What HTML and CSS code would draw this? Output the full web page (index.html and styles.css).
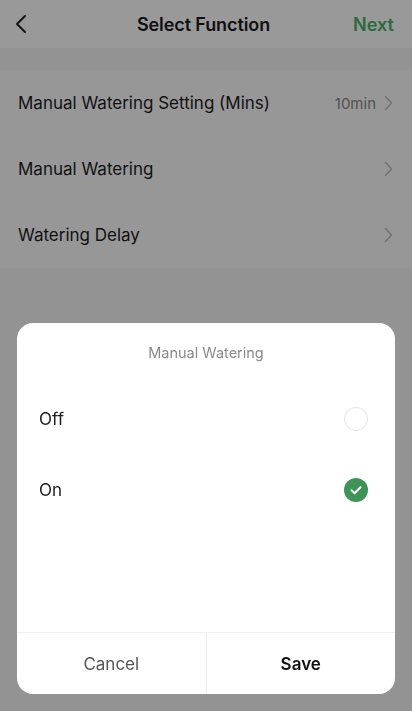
FILE: index.html
```html
<!DOCTYPE html>
<html lang="en">
<head>
<meta charset="utf-8">
<meta name="viewport" content="width=device-width, initial-scale=1">
<title>Select Function</title>
<link rel="stylesheet" href="styles.css">
</head>
<body>
<div class="page">
  <header class="nav">
    <button class="nav-back" aria-label="Back">
      <svg width="14" height="20" viewBox="0 0 14 20"><path d="M11 2 L3 10 L11 18" fill="none" stroke="#222" stroke-width="2" stroke-linecap="round" stroke-linejoin="round"/></svg>
    </button>
    <h1 class="nav-title">Select Function</h1>
    <button class="nav-next">Next</button>
  </header>
  <div class="band"></div>
  <ul class="list">
    <li class="row">
      <span class="row-label">Manual Watering Setting (Mins)</span>
      <span class="row-value">10min</span>
      <svg class="chev" width="9" height="16" viewBox="0 0 9 16"><path d="M1.5 1.5 L7.5 8 L1.5 14.5" fill="none" stroke="#bdbdbd" stroke-width="1.5" stroke-linecap="round" stroke-linejoin="round"/></svg>
    </li>
    <li class="row">
      <span class="row-label">Manual Watering</span>
      <svg class="chev" width="9" height="16" viewBox="0 0 9 16"><path d="M1.5 1.5 L7.5 8 L1.5 14.5" fill="none" stroke="#bdbdbd" stroke-width="1.5" stroke-linecap="round" stroke-linejoin="round"/></svg>
    </li>
    <li class="row">
      <span class="row-label">Watering Delay</span>
      <svg class="chev" width="9" height="16" viewBox="0 0 9 16"><path d="M1.5 1.5 L7.5 8 L1.5 14.5" fill="none" stroke="#bdbdbd" stroke-width="1.5" stroke-linecap="round" stroke-linejoin="round"/></svg>
    </li>
  </ul>
</div>

<div class="overlay">
  <div class="sheet">
    <div class="sheet-title">Manual Watering</div>
    <ul class="options">
      <li class="option">
        <span>Off</span>
        <span class="radio"></span>
      </li>
      <li class="option">
        <span>On</span>
        <span class="radio radio-on">
          <svg width="24" height="24" viewBox="0 0 24 24"><path d="M7.5 12.3 L10.6 15.2 L16.5 9.2" fill="none" stroke="#fff" stroke-width="2" stroke-linecap="round" stroke-linejoin="round"/></svg>
        </span>
      </li>
    </ul>
    <div class="actions">
      <button class="action action-cancel">Cancel</button>
      <button class="action action-save">Save</button>
    </div>
  </div>
</div>
</body>
</html>
```

FILE: styles.css
```css
* { box-sizing: border-box; }

html, body {
  margin: 0;
  padding: 0;
  height: 100%;
}

body {
  font-family: Inter, "Noto Sans", "Liberation Sans", sans-serif;
  background: #f5f5f5;
  color: #1c1c1c;
  -webkit-font-smoothing: antialiased;
}

button {
  font: inherit;
  background: none;
  border: 0;
  padding: 0;
  cursor: pointer;
}

ul { list-style: none; margin: 0; padding: 0; }

/* top navigation */
.nav {
  height: 48px;
  background: #fff;
  display: flex;
  align-items: center;
  justify-content: space-between;
  padding: 0 19px 0 14px;
}

.nav-back {
  width: 40px;
  display: flex;
  align-items: center;
  height: 48px;
}

.nav-title {
  margin: 0;
  font-size: 18px;
  font-weight: 600;
  letter-spacing: -0.1px;
  color: #1a1a1a;
}

.nav-next {
  width: 40px;
  text-align: right;
  font-size: 18px;
  font-weight: 600;
  color: #45b566;
}

.band {
  height: 22px;
  background: #f5f5f5;
}

/* function list */
.list {
  background: #fcfcfc;
}

.row {
  height: 66px;
  display: flex;
  align-items: center;
  padding: 0 19px 0 18px;
  font-size: 17px;
}

.row-label {
  flex: 1;
  color: #1c1c1c;
}

.row-value {
  font-size: 15px;
  color: #8a8a8a;
  margin-right: 8px;
}

.chev { display: block; }

/* dimmed layer with the bottom sheet */
.overlay {
  position: fixed;
  inset: 0;
  background: rgba(0, 0, 0, 0.4);
  display: flex;
  align-items: flex-end;
  padding: 0 17px 17px;
}

.sheet {
  width: 100%;
  height: 371px;
  background: #fff;
  border-radius: 16px;
  display: flex;
  flex-direction: column;
  overflow: hidden;
}

.sheet-title {
  margin-top: 20px;
  line-height: 20px;
  text-align: center;
  font-size: 14.5px;
  color: #8a8a8a;
}

.options {
  margin-top: 20px;
  flex: 1;
}

.option {
  height: 71px;
  display: flex;
  align-items: center;
  justify-content: space-between;
  padding: 0 27px 0 22px;
  font-size: 17px;
  color: #1c1c1c;
}

.radio {
  width: 24px;
  height: 24px;
  border-radius: 50%;
  border: 1px solid #e4e4e4;
  display: flex;
  align-items: center;
  justify-content: center;
}

.radio-on {
  border: 0;
  background: #3e9457;
}

.actions {
  height: 62px;
  border-top: 1px solid #f0f0f0;
  display: flex;
}

.action {
  flex: 1;
  font-size: 17px;
}

.action-cancel {
  color: #555;
  border-right: 1px solid #f0f0f0;
}

.action-save {
  color: #111;
  font-weight: 600;
}
```
